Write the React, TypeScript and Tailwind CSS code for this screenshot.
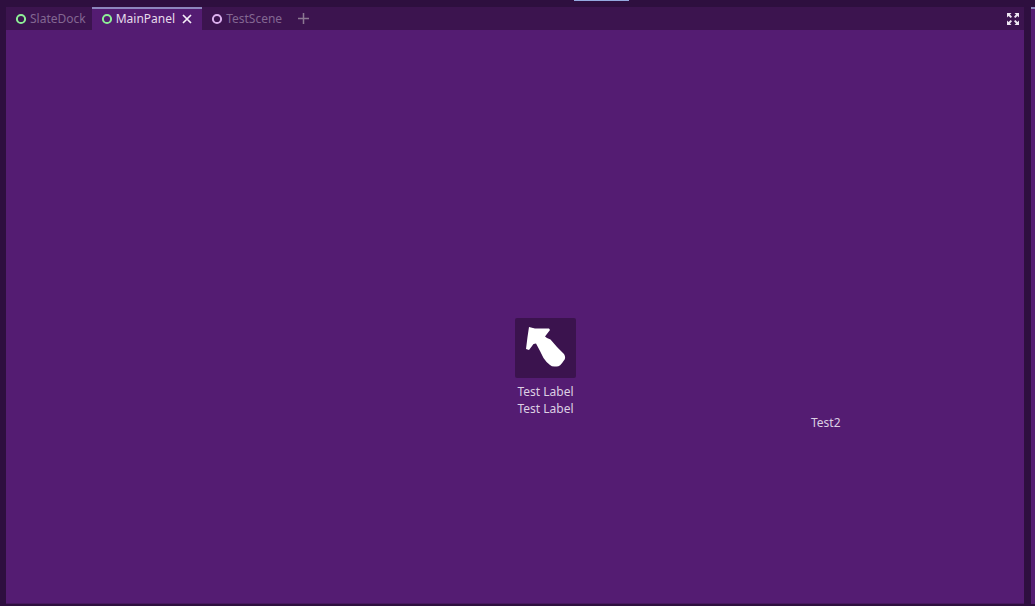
import React from "react";

const tabs = [
  { name: "SlateDock", ring: "#8eef97", active: false },
  { name: "MainPanel", ring: "#8eef97", active: true },
  { name: "TestScene", ring: "#dcb0ee", active: false },
];

function NodeIcon({ color }: { color: string }) {
  return (
    <svg width="12" height="12" viewBox="0 0 12 12" fill="none" aria-hidden="true">
      <circle cx="6" cy="6" r="4.1" stroke={color} strokeWidth="2" />
    </svg>
  );
}

function ExpandIcon() {
  return (
    <svg width="12" height="12" viewBox="0 0 12 12" fill="#eee6f2" aria-hidden="true">
      <path d="M0 0H4.500L3 1.500L5 3.700L3.700 5L1.500 3L0 4.500Z" />
      <path d="M12 0V4.500L10.500 3L8.300 5L7 3.700L9 1.500L7.500 0Z" />
      <path d="M12 12H7.500L9 10.500L7 8.300L8.300 7L10.500 9L12 7.500Z" />
      <path d="M0 12V7.500L1.500 9L3.700 7L5 8.300L3 10.500L4.500 12Z" />
    </svg>
  );
}

function Tab({ name, ring, active }: { name: string; ring: string; active: boolean }) {
  return (
    <div
      className={
        active
          ? "flex h-[23px] items-center gap-[5px] border-t-2 border-[#8d86bd] bg-[#541c72] pr-2 pb-0.5 pl-[9px] text-[#e6dbeb]"
          : "flex h-[23px] items-center pr-1.5 pl-[9px] text-[#836792]"
      }
    >
      <button role="tab" aria-selected={active} className="flex items-center gap-[3px]">
        <NodeIcon color={ring} />
        <span>{name}</span>
      </button>
      {active && (
        <button aria-label="Close tab">
          <svg width="14" height="12" viewBox="0 0 14 12" stroke="#f6f0f8" strokeWidth="1.7" aria-hidden="true">
            <path d="M3 2l8 8M11 2l-8 8" />
          </svg>
        </button>
      )}
    </div>
  );
}

export default function App() {
  return (
    <div className="flex min-h-screen flex-col bg-[#2e0f3f] font-['Noto_Sans',sans-serif] text-[12px] leading-[17px]">
      <div className="flex h-[7px] shrink-0 justify-center pl-[168px]">
        <div className="h-px w-[55px] bg-[#95a9df]" />
      </div>
      <div className="flex flex-1 gap-[7px] pb-[2px] pl-[6px]">
        <main className="flex flex-1 flex-col">
          <div className="flex h-[23px] items-center bg-[#3c144f]">
            <div role="tablist" className="flex">
              {tabs.map((tab) => (
                <Tab key={tab.name} {...tab} />
              ))}
            </div>
            <button aria-label="Add scene" className="ml-2">
              <svg width="15" height="15" viewBox="0 0 15 15" stroke="#8c7892" strokeWidth="1.5" aria-hidden="true">
                <path d="M7.5 2v11M2 7.5h11" />
              </svg>
            </button>
            <button aria-label="Distraction free mode" className="mr-[5px] ml-auto">
              <ExpandIcon />
            </button>
          </div>
          {/* scene canvas, nodes sit at their own positions */}
          <div className="relative flex-1 border-b border-[#47185f] bg-[#541c72] text-[#dccfe3]">
            <div className="absolute top-[288px] left-[509px] flex w-[61px] flex-col items-center">
              <button aria-label="Cursor" className="h-[60px] w-[61px] rounded-xs bg-[#3b134e]">
                <svg width="61" height="60" viewBox="0 0 61 60" fill="#fff" aria-hidden="true">
                  <path d="M14 9L20 10.500L34 10.500L35 12L30 18.500L32 20L35.500 21.500L42 29L49 36Q51.500 40 48.500 43Q45 49 41 48.500Q37 49 35 47Q31 44 28.500 40L25 33L21 25.500L18.500 26L14 32L11 31L12.500 19Z" />
                </svg>
              </button>
              <div className="mt-[5px] text-center whitespace-nowrap">
                <p>Test Label</p>
                <p>Test Label</p>
              </div>
            </div>
            <p className="absolute top-[384px] left-[805px]">Test2</p>
          </div>
        </main>
        <aside className="w-1 border-t-2 border-[#8d86bd] bg-[#541c72]" />
      </div>
    </div>
  );
}
